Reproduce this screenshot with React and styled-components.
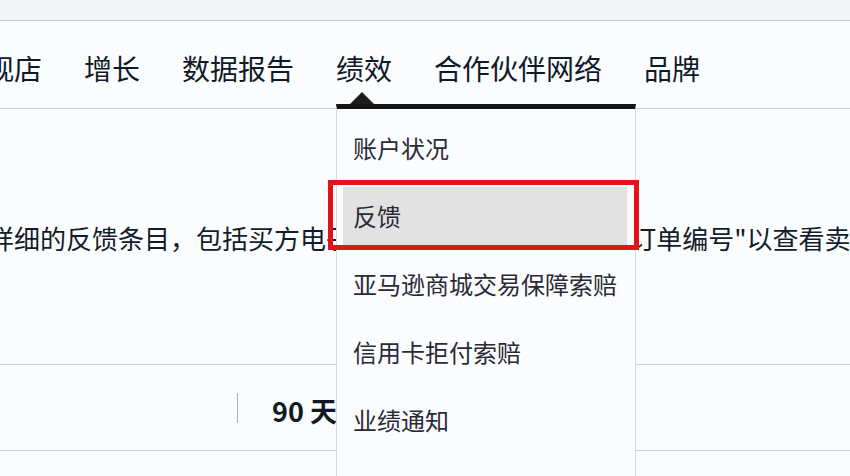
import styled, { createGlobalStyle } from 'styled-components';

const GlobalStyle = createGlobalStyle`
    body {
        margin: 0;
        background: #fbfcfd;
        font-family: "Noto Sans CJK SC", "Noto Sans", sans-serif;
    }
`

const navItems = ['观店', '增长', '数据报告', '绩效', '合作伙伴网络', '品牌'];
const menuItems = ['账户状况', '反馈', '亚马逊商城交易保障索赔', '信用卡拒付索赔', '业绩通知'];

export default function App() {
    return (
        <Page>
            <GlobalStyle />
            <TopStrip />
            <NavBar>
                {navItems.map((item) => (
                    <NavItem key={item}>
                        {item}
                        {item === '绩效' && (
                            <Dropdown>
                                {menuItems.map((m) => (
                                    <MenuItem key={m} $active={m === '反馈'}>
                                        {m}
                                        {m === '反馈' && <Highlight />}
                                    </MenuItem>
                                ))}
                            </Dropdown>
                        )}
                    </NavItem>
                ))}
            </NavBar>
            <Intro>
                详细的反馈条目，包括买方电子邮件和订单信息。点击 "订单编号"以查看卖家反馈详情
            </Intro>
            <StatsRow>
                <Divider />
                <Period>90 天</Period>
            </StatsRow>
            <BottomRow />
        </Page>
    )
}

const Page = styled.div`
    width: 850px;
    height: 476px;
    overflow: hidden;
    position: relative;
    background: #fbfcfd;
    color: #111b28;
`
const TopStrip = styled.div`
    height: 20px;
    background: #f2f4f7;
    border-bottom: 1px solid #c6c9ce;
`
const NavBar = styled.div`
    display: flex;
    gap: 42px;
    height: 88px;
    box-sizing: border-box;
    padding-top: 33px;
    margin-left: -14px;
    border-bottom: 1px solid #c9ccd1;
    font-size: 28px;
    line-height: 1;
    color: #0f1a28;
    position: relative;
    z-index: 2;
`
const NavItem = styled.div`
    position: relative;
    white-space: nowrap;
`
const Dropdown = styled.div`
    position: absolute;
    top: 50px;
    left: 0;
    width: 300px;
    height: 372px;
    box-sizing: border-box;
    display: flex;
    flex-direction: column;
    padding-top: 5px;
    background: #fbfcfd;
    border-top: 5px solid #151515;
    border-left: 1px solid #d6d9dd;
    border-right: 1px solid #d6d9dd;
    font-size: 24px;
    color: #2a2a36;
    &::before{
        content: '';
        position: absolute;
        top: -17px;
        left: 13px;
        border-left: 12px solid transparent;
        border-right: 12px solid transparent;
        border-bottom: 12px solid #1e1e1e;
    }
`
const MenuItem = styled.div`
    position: relative;
    display: flex;
    align-items: center;
    flex-shrink: 0;
    height: 58px;
    margin: 5px 8px 5px 6px;
    padding-left: 10px;
    background: ${(p) => (p.$active ? '#e2e2e3' : 'transparent')};
`
const Highlight = styled.div`
    position: absolute;
    left: -15px;
    top: -7px;
    right: -12px;
    bottom: -5px;
    border: 5px solid #e3121b;
`
const Intro = styled.div`
    height: 256px;
    box-sizing: border-box;
    padding-top: 116px;
    margin-left: -12px;
    font-size: 26px;
    line-height: 1;
    white-space: nowrap;
    color: #121c2a;
    border-bottom: 1px solid #c9ccd1;
`
const StatsRow = styled.div`
    display: flex;
    align-items: center;
    height: 86px;
    box-sizing: border-box;
    padding-left: 237px;
    border-bottom: 1px solid #c9ccd1;
`
const Divider = styled.div`
    width: 1px;
    height: 30px;
    background: #a9adb3;
    margin-right: 34px;
`
const Period = styled.div`
    font-size: 27px;
    font-weight: 700;
    color: #0f1a28;
    margin-top: 6px;
`
const BottomRow = styled.div`
    height: 40px;
`
